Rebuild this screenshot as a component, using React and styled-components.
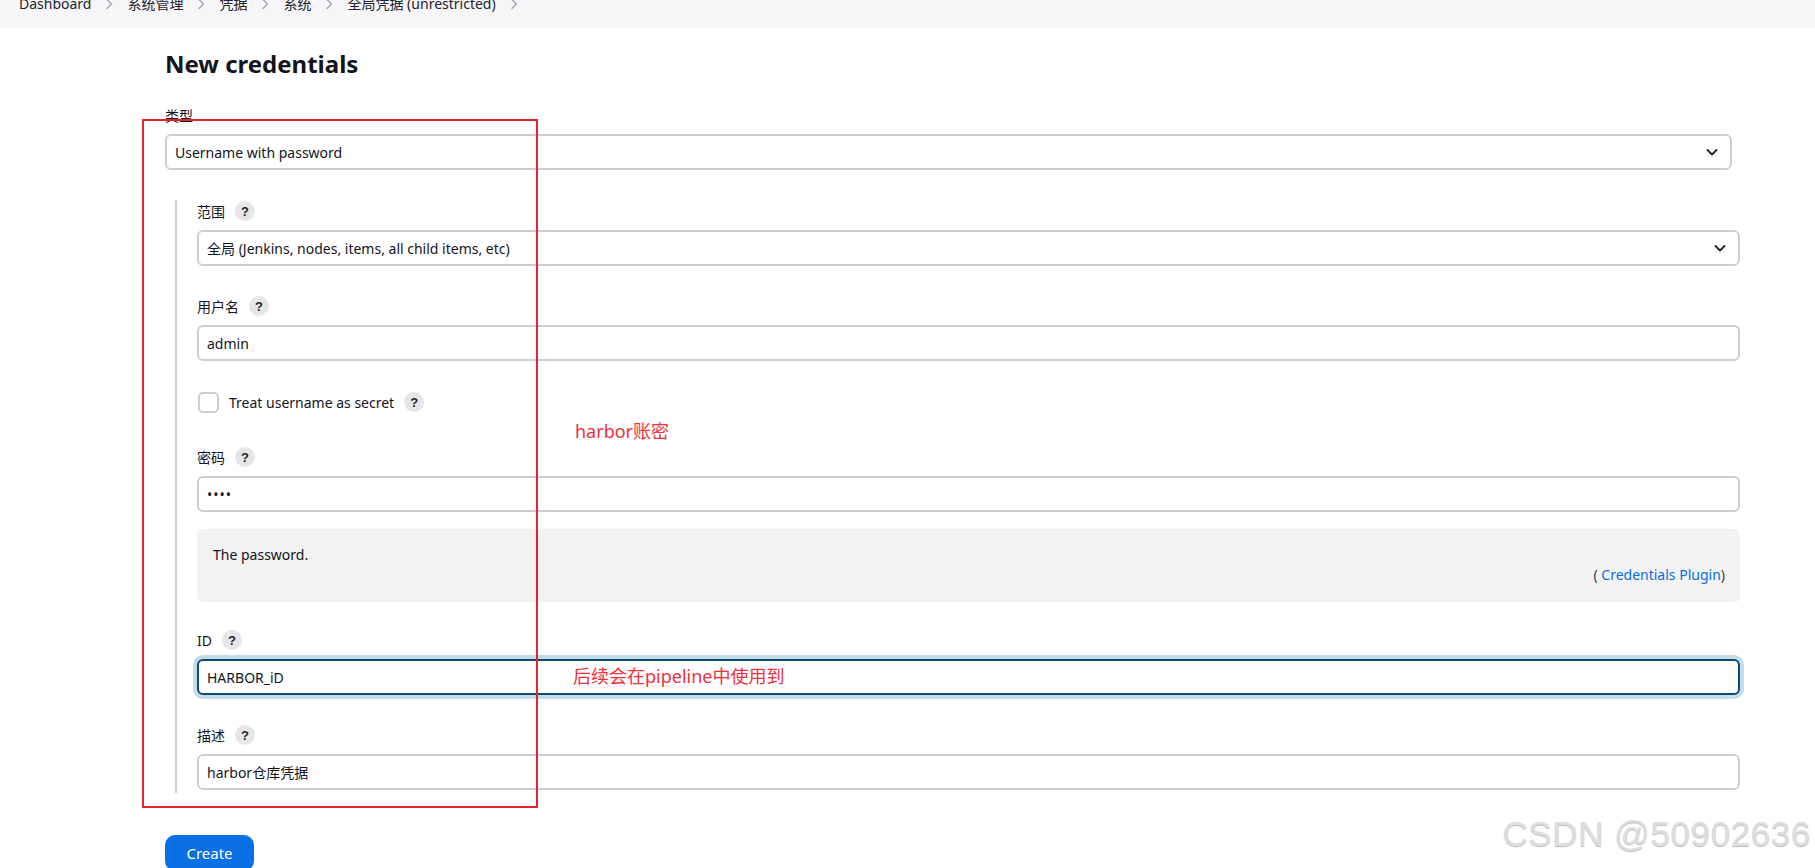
import React from "react";
import styled, { createGlobalStyle } from "styled-components";

const Global = createGlobalStyle`
  html, body { margin: 0; padding: 0; background: #fff; }
  body {
    font-family: "Noto Sans", "Noto Sans CJK SC", sans-serif;
    color: #14141f;
    -webkit-font-smoothing: antialiased;
  }
  * { box-sizing: border-box; }
`;

const Page = styled.div`
  position: relative;
  width: 1815px;
  height: 868px;
  overflow: hidden;
`;

const Crumbs = styled.nav`
  height: 28px;
  background: #f6f6f8;
  overflow: hidden;
`;

const CrumbList = styled.ol`
  list-style: none;
  margin: -6px 0 0;
  padding: 0 0 0 19px;
  display: flex;
  align-items: center;
  gap: 13px;
  font-size: 14px;
  line-height: 20px;
  color: #22222c;
`;

const Crumb = styled.li`
  display: flex;
  align-items: center;
  gap: 13px;
  white-space: nowrap;
`;

const Chevron = styled.svg`
  width: 10px;
  height: 14px;
  color: #a3a6ae;
`;

const Main = styled.main`
  width: 1575px;
  margin-left: 165px;
  padding-top: 20px;
`;

const Title = styled.h1`
  margin: 0 0 25px;
  font-size: 24px;
  line-height: 32px;
  font-weight: 700;
  color: #14141f;
`;

const Field = styled.div`
  margin-bottom: ${(p) => p.$gap ?? 30}px;
`;

const LabelRow = styled.div`
  display: flex;
  align-items: center;
  gap: 10px;
  height: 20px;
  margin-bottom: 9px;
  font-size: 14px;
  color: #14141f;
`;

const Help = styled.span`
  width: 20px;
  height: 20px;
  border-radius: 50%;
  background: #e6e6e8;
  color: #24242c;
  font-size: 13px;
  font-weight: 700;
  display: inline-flex;
  align-items: center;
  justify-content: center;
  font-family: "Liberation Sans", sans-serif;
`;

const SelectBox = styled.div`
  height: 36px;
  border: 2px solid #c8d0d5;
  border-radius: 6px;
  display: flex;
  align-items: center;
  justify-content: space-between;
  padding: 0 11px 0 8px;
  font-size: 14px;
  margin-right: ${(p) => p.$inset ?? 0}px;
  background: #fff;
`;

const Input = styled.div`
  height: 36px;
  border: 2px solid ${(p) => (p.$focus ? "#0c4a73" : "#c8d0d5")};
  border-radius: 6px;
  display: flex;
  align-items: center;
  padding: 0 8px;
  font-size: 14px;
  background: #fff;
  box-shadow: ${(p) => (p.$focus ? "0 0 0 4px #c4dbe8" : "none")};
  letter-spacing: ${(p) => (p.$dots ? "1px" : "0")};
`;

const Section = styled.div`
  margin: 30px 0 0 10px;
  border-left: 2px solid #c8d0d5;
  padding: 1px 0 3px 20px;
`;

const CheckRow = styled.label`
  display: flex;
  align-items: center;
  gap: 10px;
  height: 22px;
  margin-bottom: 34px;
  font-size: 14px;
`;

const Box = styled.span`
  width: 21px;
  height: 21px;
  border: 2px solid #c8d0d5;
  border-radius: 5px;
  background: #fff;
  margin-left: 1px;
`;

const HelpPanel = styled.div`
  background: #f2f2f3;
  border-radius: 6px;
  padding: 16px 15px 17px 16px;
  margin: -13px 0 28px;
  font-size: 14px;
  line-height: 20px;
`;

const Attribution = styled.div`
  text-align: right;
  color: #3d3d47;
  a { color: #0b6ee0; text-decoration: none; }
`;

const Button = styled.button`
  margin-top: 42px;
  width: 89px;
  height: 36px;
  border: none;
  border-radius: 10px;
  background: #0a70e3;
  color: #fff;
  font-family: inherit;
  font-size: 15px;
  padding: 0;
`;

const Annotation = styled.div`
  position: absolute;
  left: 142px;
  top: 119px;
  width: 396px;
  height: 689px;
  border: 2px solid #e3242b;
  pointer-events: none;
`;

const Note = styled.span`
  position: absolute;
  left: ${(p) => p.$x}px;
  top: ${(p) => p.$y}px;
  color: #f0303a;
  font-size: 18px;
  line-height: 24px;
  font-family: "Noto Sans", "Noto Sans CJK SC", sans-serif;
`;

const Watermark = styled.div`
  position: absolute;
  right: 4px;
  top: 814px;
  font-family: "Liberation Sans", Arial, sans-serif;
  font-size: 35px;
  line-height: 40px;
  color: #dedede;
  text-shadow: 0 1px 1px rgba(0, 0, 0, 0.28), 0 -1px 0 #fff;
  letter-spacing: 0.6px;
`;

const ChevronRight = () => (
  <Chevron viewBox="0 0 10 14" fill="none">
    <path d="M3 2.5l4.5 4.5L3 11.5" stroke="currentColor" strokeWidth="1.3" strokeLinecap="round" strokeLinejoin="round" />
  </Chevron>
);

const Caret = styled.svg`
  width: 14px;
  height: 14px;
  color: #222;
`;

const ChevronDown = () => (
  <Caret viewBox="0 0 14 14" fill="none">
    <path d="M2.5 5l4.5 4.5L11.5 5" stroke="currentColor" strokeWidth="1.8" strokeLinecap="round" strokeLinejoin="round" />
  </Caret>
);

const Label = ({ text, help = true }) => (
  <LabelRow>
    <span>{text}</span>
    {help && <Help>?</Help>}
  </LabelRow>
);

export default function App() {
  const crumbs = ["Dashboard", "系统管理", "凭据", "系统", "全局凭据 (unrestricted)"];
  return (
    <Page>
      <Global />
      <Crumbs>
        <CrumbList>
          {crumbs.map((c) => (
            <Crumb key={c}>
              <span>{c}</span>
              <ChevronRight />
            </Crumb>
          ))}
        </CrumbList>
      </Crumbs>
      <Main>
        <Title>New credentials</Title>
        <Field $gap={0}>
          <Label text="类型" help={false} />
          <SelectBox $inset={8}>
            <span>Username with password</span>
            <ChevronDown />
          </SelectBox>
        </Field>
        <Section>
          <Field>
            <Label text="范围" />
            <SelectBox>
              <span>全局 (Jenkins, nodes, items, all child items, etc)</span>
              <ChevronDown />
            </SelectBox>
          </Field>
          <Field>
            <Label text="用户名" />
            <Input>admin</Input>
          </Field>
          <CheckRow>
            <Box />
            <span>Treat username as secret</span>
            <Help>?</Help>
          </CheckRow>
          <Field>
            <Label text="密码" />
            <Input $dots>••••</Input>
          </Field>
          <HelpPanel>
            <div>The password.</div>
            <Attribution>
              ( <a href="#">Credentials Plugin</a>)
            </Attribution>
          </HelpPanel>
          <Field>
            <Label text="ID" />
            <Input $focus>HARBOR_iD</Input>
          </Field>
          <Field $gap={0}>
            <Label text="描述" />
            <Input>harbor仓库凭据</Input>
          </Field>
        </Section>
        <Button>Create</Button>
      </Main>
      <Annotation />
      <Note $x={575} $y={419}>harbor账密</Note>
      <Note $x={573} $y={664}>后续会在pipeline中使用到</Note>
      <Watermark>CSDN @50902636</Watermark>
    </Page>
  );
}
